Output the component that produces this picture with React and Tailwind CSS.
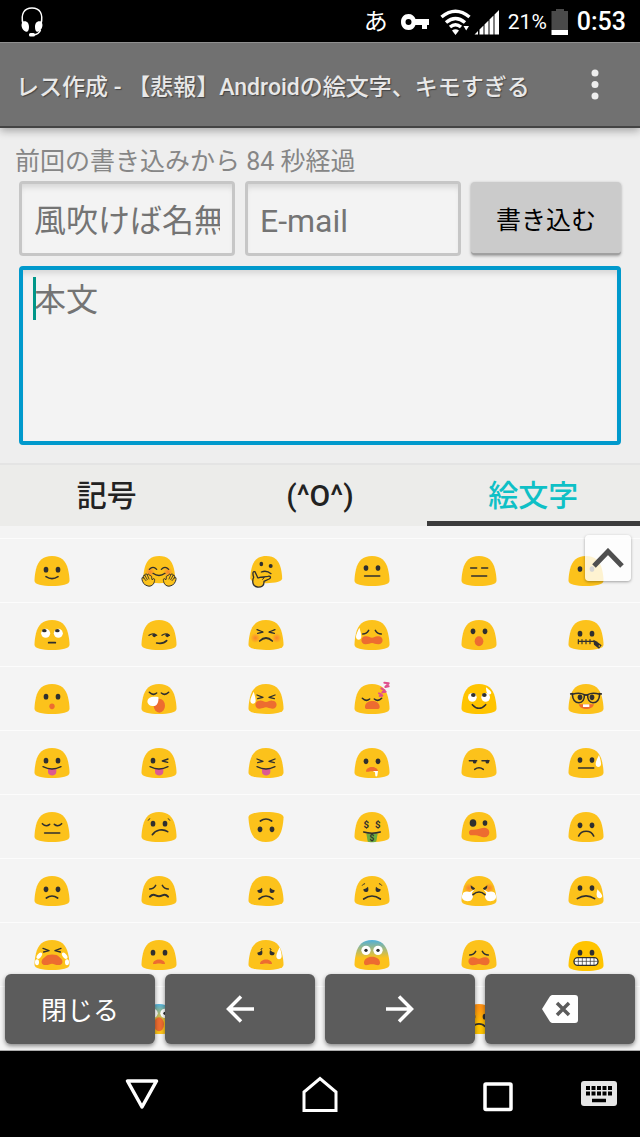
import React, { useState } from 'react';

const INK = '#2f2f2f';
const ORANGE = '#ed6c30';

const BODY = 'M60 15 C88 15 102 30 108 55 C111 68 112.500 79 112.500 89 C112.500 100 90 105 60 105 C30 105 7.500 100 7.500 89 C7.500 79 9 68 12 55 C18 30 32 15 60 15 Z';

// Small pieces the faces are put together from
const Eyes = ({ y = 55 }) => (
    <g fill={INK}>
        <ellipse cx="42" cy={y} rx="7" ry="8.5" />
        <ellipse cx="78" cy={y} rx="7" ry="8.5" />
    </g>
);

const SadEyes = ({ y = 55 }) => (
    <g fill={INK} transform={`translate(0 ${y})`}>
        <path d="M34 0 Q42 -2 48 -8 C51 4 48 8 42 8 C37 8 34 5 34 0 Z" />
        <path d="M86 0 Q78 -2 72 -8 C69 4 72 8 78 8 C83 8 86 5 86 0 Z" />
    </g>
);

const Line = ({ d, w = 5, color = INK }) => (
    <path d={d} fill="none" stroke={color} strokeWidth={w} strokeLinecap="round" strokeLinejoin="round" />
);

const Drop = ({ x, y, turn = 0 }) => (
    <path
        transform={`translate(${x} ${y}) rotate(${turn})`}
        d="M2 -19 C-2 -10 -8 0 -8 8 C-8 20 8 20 8 8 C8 0 5 -10 2 -19 Z"
        fill="#fff"
    />
);

const Blush = ({ y = 63, x = 30 }) => (
    <g fill="url(#blush)">
        <circle cx={x} cy={y} r="15" />
        <circle cx={120 - x} cy={y} r="15" />
    </g>
);

const Squint = ({ y = 50 }) => (
    <g transform={`translate(0 ${y})`}>
        <Line d="M33 -5 L51 2 L35 6 M87 -5 L69 2 L85 6" w={4} />
    </g>
);

const Closed = ({ y = 45 }) => (
    <g transform={`translate(0 ${y})`}>
        <Line d="M31 -3 Q42 8 53 -1 M67 -1 Q78 8 89 -3" w={4.5} />
    </g>
);

const Weary = ({ y = 50 }) => (
    <g transform={`translate(0 ${y})`}>
        <Line d="M32 6 Q44 6 50 -5 M70 -5 Q76 6 88 6" w={4.5} />
    </g>
);

const Wail = ({ y = 76 }) => (
    <path
        transform={`translate(0 ${y})`}
        d="M41 -12 C50 -13 54 -8 60 -8 C66 -8 70 -13 79 -12 C96 -12 96 12 79 12 C70 12 66 8 60 8 C54 8 50 12 41 12 C24 12 24 -12 41 -12 Z"
        fill={ORANGE}
    />
);

const Gape = ({ y = 80, w = 18, h = 7 }) => (
    <path
        transform={`translate(60 ${y})`}
        d={`M${-w} ${h} C${-w} ${-h * 1.6} ${w} ${-h * 1.6} ${w} ${h} C${w * 0.5} ${h * 1.1} ${w * 0.4} ${h * 0.8} 0 ${h * 0.8} C${-w * 0.4} ${h * 0.8} ${-w * 0.5} ${h * 1.1} ${-w} ${h} Z`}
        fill={ORANGE}
    />
);

const Tongue = () => (
    <>
        <path d="M48 77 H73 V87 C73 101 48 101 48 87 Z" fill="#dc5a92" />
        <Line d="M33 71 Q60 85 87 71" w={4} />
    </>
);

const Hand = () => (
    <>
        <path
            d="M-8 14 C-16 8 -19 -2 -18 -7 C-17 -11 -13 -9 -12 -6 C-16 -14 -13 -17 -9 -14 C-10 -21 -4 -20 -2 -16 C0 -21 5 -18 6 -13 C9 -16 12 -12 11 -7 L13 -1 C17 -9 22 -5 19 4 C17 14 8 19 0 17 Z"
            fill="#fcc21b"
            stroke={INK}
            strokeWidth="3"
            strokeLinejoin="round"
        />
        <Line d="M-12 -6 L-6 1 M-9 -14 L-2 -2 M-2 -16 L3 -4" w={2.5} />
    </>
);

const Dollar = ({ x, y, size = 29 }) => (
    <text x={x} y={y} fontSize={size} fontWeight="700" textAnchor="middle" fill={INK} fontFamily="Roboto, sans-serif">$</text>
);

const frown = (l, y, c) => `M${l} ${y} Q60 ${c} ${120 - l} ${y}`;

const FACES = [
    { name: 'slight smile', art: <><Eyes y={56} /><Line d="M42 77 Q60 89 78 77" /></> },
    {
        name: 'hugging', small: true, art: (
            <>
                <Blush x={33} />
                <Line d="M31 55 Q42 43 53 55 M67 55 Q78 43 89 55" w={4} />
                <Line d="M42 67 Q60 80 78 67" w={4} />
                <g transform="translate(27 88)"><Hand /></g>
                <g transform="translate(93 88) scale(-1 1)"><Hand /></g>
            </>
        ),
    },
    {
        name: 'thinking', small: true, art: (
            <>
                <ellipse cx="46" cy="39" rx="5.5" ry="7" fill={INK} />
                <ellipse cx="74" cy="45" rx="6" ry="6" fill={INK} />
                <Line d="M46 63 Q62 57 75 68" w={4} />
                <path d="M27 62 C19 60 20 70 23 79 C17 92 21 107 34 108 C47 109 55 104 54 91 L69 84 C77 80 73 74 66 76 L42 79 C35 80 36 83 34 77 Z" fill="#fcc21b" stroke={INK} strokeWidth="4" strokeLinejoin="round" />
                <Line d="M42 79 H55 L50 85" w={3} />
            </>
        ),
    },
    { name: 'neutral', art: <><Eyes y={51} /><Line d="M38 75 H83" /></> },
    { name: 'expressionless', art: <Line d="M35 51 H53 M68 51 H86 M38 75 H83" w={4.5} /> },
    { name: 'no mouth', art: <Eyes y={54} /> },

    {
        name: 'rolling eyes', art: (
            <>
                <g fill="#fff"><circle cx="41" cy="55" r="13.5" /><circle cx="79" cy="55" r="13.5" /></g>
                <g fill={INK}><ellipse cx="37" cy="47" rx="7" ry="5" /><ellipse cx="76" cy="47" rx="7" ry="5" /></g>
                <Line d="M50 83 H70" w={5} />
            </>
        ),
    },
    {
        name: 'smirk', art: (
            <>
                <Line d="M30 61 Q42 52 53 61 M69 61 Q80 52 91 61" w={4} />
                <g fill={INK}><circle cx="46" cy="61" r="5.5" /><circle cx="85" cy="61" r="5.5" /></g>
                <Line d="M53 84 Q73 88 83 77" />
            </>
        ),
    },
    { name: 'persevering', art: <><Blush y={69} x={28} /><Squint y={49} /><Line d={frown(41, 78, 60)} /></> },
    { name: 'weary with sweat', art: <><Drop x={20} y={57} /><Weary y={51} /><Wail /></> },
    { name: 'open mouth', art: <><Eyes y={49} /><ellipse cx="60" cy="79" rx="13" ry="15" fill={ORANGE} /></> },
    {
        name: 'zipper mouth', art: (
            <>
                <Eyes y={56} />
                <Line d="M37 79 H84 M37 74 V86 M48 74 V86 M60 74 V86 M72 74 V86" w={3.5} />
                <path d="M82 74 L91 79 L107 91 L99 101 L84 89 Z" fill={INK} />
                <circle cx="100" cy="93" r="2.5" fill="#fcc21b" />
            </>
        ),
    },

    { name: 'hushed', art: <><Eyes y={53} /><ellipse cx="60" cy="82" rx="8" ry="8.5" fill={ORANGE} /></> },
    {
        name: 'sleepy', art: (
            <>
                <Closed y={43} />
                <ellipse cx="61" cy="80" rx="17" ry="21" fill={ORANGE} />
                <path d="M58 54 C60 72 53 83 40 81 C25 79 20 64 32 56 C39 52 48 54 58 54 Z" fill="#fff" />
            </>
        ),
    },
    { name: 'tired with sweat', art: <><Drop x={21} y={57} /><Squint y={53} /><Wail y={77} /></> },
    {
        name: 'sleeping', art: (
            <>
                <Closed y={61} />
                <path d="M39 82 C42 61 80 61 83 82 C84 93 77 90 60 90 C43 90 38 93 39 82 Z" fill={ORANGE} />
                <Line d="M81 43 L89 47 L83 51 L91 50 M88 28 L98 34 L91 40 L101 38 M97 11 L110 13 L100 24 L110 22" w={6} color="#e04f8d" />
            </>
        ),
    },
    {
        name: 'relieved', bright: true, art: (
            <>
                <g fill="#fff"><circle cx="40" cy="55" r="13" /><circle cx="80" cy="55" r="13" /></g>
                <g fill={INK}><ellipse cx="43" cy="48" rx="7" ry="6" /><ellipse cx="76" cy="48" rx="7" ry="6" /></g>
                <Line d="M40 77 Q60 99 80 77" w={4.5} />
                <g transform="translate(87 36) scale(.8 .65)"><Drop x={0} y={0} turn={-30} /></g>
            </>
        ),
    },
    {
        name: 'nerd', art: (
            <>
                <path d="M38 76 H84 C80 95 42 95 38 76 Z" fill={ORANGE} />
                <path d="M51 76 H70 V84 H51 Z" fill="#fff" />
                <Eyes y={55} />
                <g fill="none" stroke={INK} strokeWidth="4.5">
                    <path d="M19 46 C31 42 46 42 55 47 C56 61 50 71 39 71 C26 71 20 61 19 46 Z" />
                    <path d="M101 46 C89 42 74 42 65 47 C64 61 70 71 81 71 C94 71 100 61 101 46 Z" />
                    <path d="M12 45 L22 44 M54 50 Q60 45 66 50 M108 45 L98 44" strokeWidth="5" />
                </g>
            </>
        ),
    },

    { name: 'tongue out', art: <><Eyes y={53} /><Tongue /></> },
    { name: 'winking tongue', art: <><ellipse cx="42" cy="53" rx="7" ry="8.5" fill={INK} /><Line d="M87 48 L70 54 L86 58" w={4} /><Tongue /></> },
    { name: 'squinting tongue', art: <><Squint y={53} /><Tongue /></> },
    {
        name: 'drooling', art: (
            <>
                <Eyes y={55} />
                <Gape y={79} />
                <path d="M62 84 H78 L76 98 C75 101 70 101 70 98 L69 88 Z" fill="#fff" />
            </>
        ),
    },
    {
        name: 'unamused', art: (
            <>
                <Line d="M31 53 H53 M69 53 H90" w={4.5} />
                <g fill={INK}><circle cx="47" cy="56" r="5.5" /><circle cx="85" cy="56" r="5.5" /></g>
                <Line d={frown(47, 79, 69)} w={4.5} />
            </>
        ),
    },
    { name: 'neutral with sweat', art: <><Eyes y={51} /><Line d="M38 75 H83" /><Drop x={97} y={55} /></> },

    { name: 'pensive', art: <><Closed y={53} /><Line d="M38 78 H83" /></> },
    { name: 'confused', art: <><Eyes y={50} /><Line d="M28 40 L32 35 M92 40 L88 35" w={3} /><Line d="M40 83 C50 68 72 64 86 74" /></> },
    { name: 'upside down', flip: true, art: <><Line d="M43 42 Q60 30 77 42" /><Eyes y={67} /></> },
    {
        name: 'money mouth', art: (
            <>
                <Dollar x={43} y={62} /><Dollar x={77} y={62} />
                <path d="M43 80 H77 L73 103 C72 107 48 107 47 103 Z" fill="#6dac40" />
                <Line d="M35 75 Q60 82 85 75" w={4.5} />
                <Dollar x={60} y={101} size={25} />
            </>
        ),
    },
    {
        name: 'woozy', art: (
            <>
                <g fill={INK}><ellipse cx="42" cy="48" rx="10" ry="11.5" /><ellipse cx="78" cy="48" rx="7" ry="8.5" /></g>
                <path d="M38 68 C52 70 60 63 76 62 C96 62 96 90 76 91 C66 91 62 84 38 85 C27 85 27 68 38 68 Z" fill={ORANGE} />
            </>
        ),
    },
    { name: 'frowning', art: <><Eyes y={55} /><Line d="M38 87 C46 68 75 68 83 87" /></> },

    { name: 'slight frown', art: <><Eyes y={55} /><Line d={frown(43, 81, 69)} /></> },
    { name: 'confounded', art: <><Weary y={48} /><Line d="M33 77 Q40 68 50 73 Q60 78 70 73 Q80 68 87 77" w={6} /></> },
    { name: 'disappointed', art: <><SadEyes y={58} /><Line d={frown(39, 84, 66)} /></> },
    { name: 'worried', art: <><SadEyes y={55} /><Line d="M31 43 Q34 38 38 38 M89 43 Q86 38 82 38" w={3} /><Line d={frown(35, 84, 66)} /></> },
    {
        name: 'steam from nose', art: (
            <>
                <Blush y={51} x={29} />
                <path d="M35 43 L48 52 C46 61 34 57 35 43 Z M85 43 L72 52 C74 61 86 57 85 43 Z" fill={INK} />
                <path d="M47 55 L33 63 C24 60 12 61 11 70 C6 78 10 85 14 87 C19 92 37 92 39 84 C45 78 40 69 38 67 Z M73 55 L87 63 C96 60 108 61 109 70 C114 78 110 85 106 87 C101 92 83 92 81 84 C75 78 80 69 82 67 Z" fill="#fff" />
                <Line d={frown(42, 71, 55)} />
            </>
        ),
    },
    { name: 'crying', art: <><Eyes y={51} /><Line d={frown(34, 83, 66)} /><g transform="translate(98 69) scale(1 .75)"><Drop x={0} y={0} turn={-18} /></g></> },

    {
        name: 'loudly crying', art: (
            <>
                <Squint y={45} />
                <path d="M40 65 C45 56 76 56 81 65 C98 76 92 91 79 90 C70 90 66 86 60 86 C54 86 50 90 41 90 C28 91 22 76 40 65 Z" fill={ORANGE} />
                <g fill="#fff">
                    <ellipse cx="22" cy="62" rx="6" ry="11" transform="rotate(38 22 62)" />
                    <ellipse cx="98" cy="62" rx="6" ry="11" transform="rotate(-38 98 62)" />
                    <ellipse cx="15" cy="82" rx="6" ry="9" />
                    <ellipse cx="105" cy="82" rx="6" ry="9" />
                </g>
            </>
        ),
    },
    { name: 'frowning open mouth', art: <><Eyes y={53} /><Gape y={80} /></> },
    { name: 'anxious with sweat', art: <><SadEyes y={53} /><Line d="M45 44 L48 40 M75 44 L72 40" w={3} /><Gape y={80} /><Drop x={99} y={56} /></> },
    {
        name: 'fearful', tint: 'url(#cold)', art: (
            <>
                <g fill="#fff"><circle cx="42" cy="46" r="14" /><circle cx="78" cy="46" r="14" /></g>
                <g fill={INK}><circle cx="42" cy="46" r="5" /><circle cx="78" cy="46" r="5" /></g>
                <path d="M36 85 C34 59 86 59 84 85 C82 95 73 88 60 88 C47 88 38 95 36 85 Z" fill={ORANGE} />
            </>
        ),
    },
    { name: 'weary', art: <><Weary y={54} /><Wail y={79} /></> },
    {
        name: 'grimacing', bright: true, low: true, art: (
            <g transform="translate(0 3)">
                <Eyes y={50} />
                <rect x="24" y="65" width="72" height="23" rx="11" fill="#fff" stroke={INK} strokeWidth="4" />
                <Line d="M26 76 H94 M37 67 V86 M49 67 V86 M61 67 V86 M73 67 V86 M84 67 V86" w={2} />
            </g>
        ),
    },

    { name: 'anguished', art: <><Eyes /><Gape /></> },
    {
        name: 'screaming', tint: 'url(#cold)', art: (
            <>
                <g fill="#fff"><circle cx="42" cy="43" r="14" /><circle cx="78" cy="43" r="14" /></g>
                <g fill={INK}><circle cx="42" cy="43" r="5" /><circle cx="78" cy="43" r="5" /></g>
                <ellipse cx="60" cy="76" rx="15" ry="21" fill={ORANGE} />
            </>
        ),
    },
    { name: 'flushed', art: <><Blush /><Eyes /></> },
    { name: 'dizzy', art: <><Squint /><Gape /></> },
    { name: 'pouting', bright: true, tint: 'url(#hot)', art: <><Eyes y={53} /><Line d="M43 82 C50 72 70 72 77 82" /></> },
    { name: 'angry', art: <><Eyes /><Line d={frown(40, 84, 66)} /></> },
];

const bodyTransform = (face) => {
    if (face.small) return 'translate(6 1) scale(.91)';
    if (face.flip) return 'translate(0 120) scale(1 -1)';
    if (face.low) return 'translate(0 3)';
    return undefined;
};

const Face = ({ face }) => (
    <svg width="40" height="40" viewBox="0 0 120 120" aria-hidden="true">
        <path d={BODY} fill={face.tint || (face.bright ? '#ffc400' : '#fcc21b')} transform={bodyTransform(face)} />
        {face.art}
    </svg>
);

const SharedPaints = () => (
    <svg width="0" height="0" className="absolute" aria-hidden="true">
        <defs>
            <radialGradient id="blush">
                <stop offset="0.1" stopColor="#f98a2c" />
                <stop offset="1" stopColor="#f98a2c" stopOpacity="0" />
            </radialGradient>
            <linearGradient id="cold" x1="0" y1="0" x2="0" y2="1">
                <stop offset="0" stopColor="#4fb0dc" />
                <stop offset="0.6" stopColor="#fcc21b" />
            </linearGradient>
            <linearGradient id="hot" x1="0" y1="0" x2="0" y2="1">
                <stop offset="0.1" stopColor="#ff9212" />
                <stop offset="0.7" stopColor="#ffc400" />
            </linearGradient>
        </defs>
    </svg>
);

const StatusBar = () => (
    <div className="flex h-[42px] items-center bg-black pl-5 pr-[14px] pt-0.5 text-white">
        <svg width="24" height="30" viewBox="0 0 24 30" className="mr-auto">
            <path d="M3 17 C0.500 7 4 1 12 1 C20 1 23.500 7 21 17" fill="none" stroke="#fff" strokeWidth="1.500" />
            <path d="M3 14.500 C7 13.500 9 16 9 20 C9 24 7.500 25.500 5.500 24.500 C2 23 0 17.500 3 14.500 Z M21 14.500 C17 13.500 15 16 15 20 C15 24 16.500 25.500 18.500 24.500 C22 23 24 17.500 21 14.500 Z" fill="#fff" />
            <path d="M20.500 23 Q19 27.500 13 28" fill="none" stroke="#fff" strokeWidth="1.500" />
            <rect x="9" y="26" width="6" height="3.500" rx="1.500" fill="#fff" />
        </svg>
        <span className="text-2xl leading-8">あ</span>
        <svg width="30" height="18" viewBox="0 0 30 18" className="ml-3">
            <path fillRule="evenodd" fill="#fff" d="M8.500 1 C12 1 14.500 3 15.500 6 H29 V12 H27 V16 H22 V12 H15.500 C14.500 15 12 17 8.500 17 C4 17 1 13.500 1 9 C1 4.500 4 1 8.500 1 Z M8.500 6 A3 3 0 1 0 8.500 12 A3 3 0 1 0 8.500 6 Z" />
        </svg>
        <svg width="32" height="26" viewBox="0 0 32 26" className="ml-2.5">
            <g fill="none" stroke="#fff" strokeWidth="3.500">
                <path d="M1.500 8 Q15.500 -3.500 29.500 8" />
                <path d="M6 13.500 Q15.500 5.500 25 13.500" />
                <path d="M10 18 Q15.500 13.500 21 18" />
            </g>
            <path d="M12 21.500 Q15.500 19 19 21.500 L15.500 26 Z M23.500 17 H29 L26.200 21.500 Z" fill="#fff" />
        </svg>
        <svg width="26" height="26" viewBox="0 0 26 26" className="ml-0.5">
            <path d="M0.500 25.500 L4 22 V25.500 Z M5.500 20.500 L9.500 16.500 V25.500 H5.500 Z M10.500 15.500 L14.500 11.500 V25.500 H10.500 Z M15.500 10.500 L19.500 6.500 V25.500 H15.500 Z M20.500 5.500 L25 1 V25.500 H20.500 Z" fill="#fff" />
        </svg>
        <span className="ml-2 text-[21px] leading-8">21%</span>
        <svg width="18" height="26" viewBox="0 0 18 26" className="ml-1">
            <path d="M0.500 2 H5 V0 H13 V2 H17 V21 H0.500 Z" fill="#4a4a4a" />
            <rect x="0.500" y="21" width="16.500" height="5" fill="#fff" />
        </svg>
        <span className="ml-2 text-[25px] font-medium leading-8">0:53</span>
    </div>
);

const TitleBar = () => (
    <header className="flex h-[86px] items-center border-b-2 border-t border-b-[#444] border-t-[#909090] bg-[#717171] pl-4 pr-[27px] shadow-[0_3px_8px_rgba(0,0,0,0.3)]">
        <h1 className="flex-1 truncate pt-1.5 text-[23px] font-medium leading-8 text-[#e8e8e8] [text-shadow:1px_1px_1px_#444]">
            レス作成 - 【悲報】Androidの絵文字、キモすぎる
        </h1>
        <button type="button" aria-label="メニュー" className="flex w-9 justify-center">
            <svg width="8" height="32" viewBox="0 0 8 32" fill="#eee">
                <circle cx="4" cy="4" r="3.500" />
                <circle cx="4" cy="15.500" r="3.500" />
                <circle cx="4" cy="27" r="3.500" />
            </svg>
        </button>
    </header>
);

const fieldClass = 'block h-[75px] w-full rounded border-[3px] border-[#c6c6c6] bg-[#f3f3f3] px-3 pt-1 text-[32px] leading-10 placeholder-[#747474] outline-none shadow-[inset_0_6px_6px_-3px_rgba(0,0,0,0.13)]';

const PostForm = () => (
    <form className="px-[19px] pb-[18px] pt-[18px]" onSubmit={(e) => e.preventDefault()}>
        <p className="-ml-1 text-[25px] leading-8 text-[#868686]">前回の書き込みから 84 秒経過</p>
        <div className="mt-[3px] flex items-center gap-[10px]">
            <label className="min-w-0 flex-1">
                <input type="text" aria-label="名前" placeholder="風吹けば名無し" className={fieldClass} />
            </label>
            <label className="min-w-0 flex-1">
                <input type="email" aria-label="E-mail" placeholder="E-mail" className={fieldClass} />
            </label>
            <button
                type="submit"
                className="h-[73px] w-[150px] rounded border-b-2 border-[#a0a0a0] bg-[#cbcbcb] pt-1.5 text-[25px] leading-8 text-black shadow-[0_1px_3px_rgba(0,0,0,0.35)]"
            >
                書き込む
            </button>
        </div>
        <div className="relative mt-[10px]">
            <textarea
                aria-label="本文"
                placeholder="本文"
                className="block h-[179px] w-full resize-none rounded border-4 border-[#0099cc] bg-[#f3f3f3] px-[11px] py-2 text-[32px] leading-[44px] placeholder-[#747474] caret-[#009688] outline-none shadow-[inset_0_6px_6px_-3px_rgba(0,0,0,0.13)]"
            />
            <span className="absolute left-[14px] top-[11px] h-[43px] w-[3px] bg-[#009688]" />
        </div>
    </form>
);

const TABS = ['記号', '(^O^)', '絵文字'];

const Tabs = ({ active, onChange }) => (
    <div role="tablist" className="grid grid-cols-3 border-t-2 border-[#e4e4e4] bg-[#ececea]">
        {TABS.map((tab, idx) => (
            <button
                key={tab}
                type="button"
                role="tab"
                aria-selected={active === idx}
                onClick={() => onChange(idx)}
                className={`h-[61px] border-b-[5px] pt-1.5 text-[30px] font-medium leading-10 ${active === idx ? 'border-[#3c3c3c] text-[#0fc0c6]' : 'border-transparent text-[#222]'}`}
            >
                {tab}
            </button>
        ))}
    </div>
);

const padClass = 'flex h-[70px] flex-1 items-center justify-center rounded-md bg-[#5c5c5c] text-[26px] leading-8 text-white shadow-[0_2px_4px_rgba(0,0,0,0.45)]';

const EmojiPanel = () => (
    <div className="relative overflow-hidden border-b border-[#aaa] bg-[#f4f4f4] pt-3">
        <div className="grid grid-cols-6">
            {FACES.map((face) => (
                <button
                    key={face.name}
                    type="button"
                    aria-label={face.name}
                    className="flex h-16 items-center justify-center border-t border-[#fcfcfc] pr-0.5"
                >
                    <Face face={face} />
                </button>
            ))}
        </div>

        <button
            type="button"
            aria-label="上へ"
            className="absolute right-[9px] top-[9px] flex size-[46px] items-center justify-center rounded bg-white/80 shadow-[0_1px_3px_rgba(0,0,0,0.35)]"
        >
            <svg width="32" height="20" viewBox="0 0 32 20">
                <path d="M2 18 L16 3.500 L30 18" fill="none" stroke="#4f4f4f" strokeWidth="5" />
            </svg>
        </button>

        <div className="absolute inset-x-0 bottom-1.5 flex gap-[10px] px-[5px]">
            <button type="button" className={padClass}>
                <span className="pt-1">閉じる</span>
            </button>
            <button type="button" aria-label="左へ" className={padClass}>
                <svg width="30" height="28" viewBox="0 0 30 28" fill="none" stroke="#fff" strokeWidth="3.500">
                    <path d="M29 14 H3 M16 1.500 L3.500 14 L16 26.500" />
                </svg>
            </button>
            <button type="button" aria-label="右へ" className={padClass}>
                <svg width="30" height="28" viewBox="0 0 30 28" fill="none" stroke="#fff" strokeWidth="3.500">
                    <path d="M1 14 H27 M14 1.500 L26.500 14 L14 26.500" />
                </svg>
            </button>
            <button type="button" aria-label="削除" className={padClass}>
                <svg width="36" height="28" viewBox="0 0 36 28">
                    <path d="M11 0 H33 C35 0 36 1 36 3 V25 C36 27 35 28 33 28 H11 C9.500 28 8.500 27.500 7.500 26 L0 14 L7.500 2 C8.500 0.500 9.500 0 11 0 Z" fill="#fff" />
                    <path d="M15 8 L27 20 M27 8 L15 20" stroke="#5c5c5c" strokeWidth="3.500" />
                </svg>
            </button>
        </div>
    </div>
);

const NavBar = () => (
    <nav className="flex h-[86px] items-center bg-black pl-[53px]">
        <button type="button" aria-label="戻る" className="flex flex-1 justify-center">
            <svg width="36" height="36" viewBox="0 0 36 36">
                <path d="M3.500 5 H32.500 L18 31 Z" fill="none" stroke="#fff" strokeWidth="3.500" strokeLinejoin="round" />
            </svg>
        </button>
        <button type="button" aria-label="ホーム" className="flex flex-1 justify-center">
            <svg width="36" height="36" viewBox="0 0 36 36">
                <path d="M2 34.500 V16 L18 2.500 L34 16 V34.500 Z" fill="none" stroke="#fff" strokeWidth="3" />
            </svg>
        </button>
        <button type="button" aria-label="履歴" className="flex flex-1 justify-center">
            <svg width="36" height="36" viewBox="0 0 36 36">
                <rect x="5" y="8" width="26" height="25.500" rx="1" fill="none" stroke="#fff" strokeWidth="3.500" />
            </svg>
        </button>
        <button type="button" aria-label="キーボード" className="flex w-[53px] justify-end pr-[23px]">
            <svg width="36" height="26" viewBox="0 0 36 26" className="shrink-0">
                <rect width="36" height="25" rx="3" fill="#e6e6e6" />
                <path d="M5 7 H31 M5 12.500 H31" stroke="#000" strokeWidth="4" strokeDasharray="4 1.500" />
                <path d="M11 19.500 H25" stroke="#000" strokeWidth="3.500" />
            </svg>
        </button>
    </nav>
);

export default function App() {
    const [tab, setTab] = useState(2);

    return (
        <div className="min-h-screen bg-[#eeeeee] font-[Roboto,'Noto_Sans_CJK_JP',sans-serif]" lang="ja">
            <SharedPaints />
            <StatusBar />
            <TitleBar />
            <PostForm />
            <Tabs active={tab} onChange={setTab} />
            <EmojiPanel />
            <NavBar />
        </div>
    );
}
